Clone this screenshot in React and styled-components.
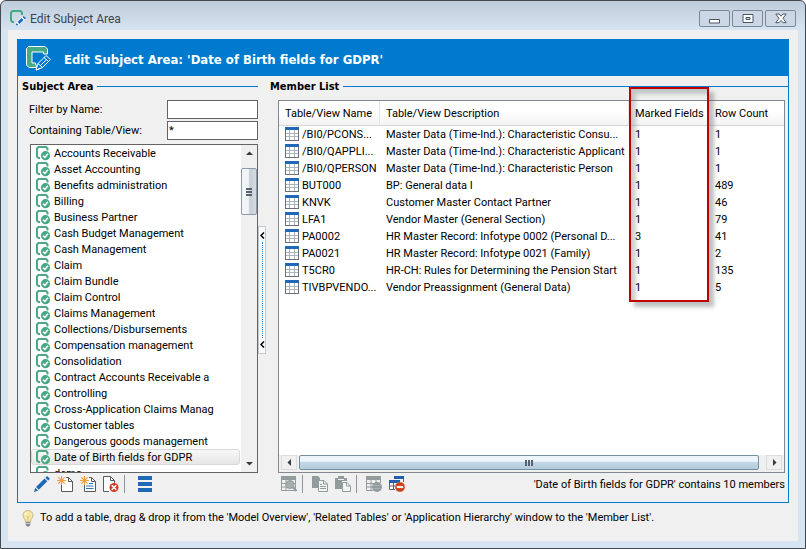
import React, { Component } from "react";
import styled, { createGlobalStyle, css } from "styled-components";

const subjects = [
  "Accounts Receivable",
  "Asset Accounting",
  "Benefits administration",
  "Billing",
  "Business Partner",
  "Cash Budget Management",
  "Cash Management",
  "Claim",
  "Claim Bundle",
  "Claim Control",
  "Claims Management",
  "Collections/Disbursements",
  "Compensation management",
  "Consolidation",
  "Contract Accounts Receivable a",
  "Controlling",
  "Cross-Application Claims Manag",
  "Customer tables",
  "Dangerous goods management",
  "Date of Birth fields for GDPR",
  "demo"
];

const members = [
  { name: "/BI0/PCONS...", description: "Master Data (Time-Ind.): Characteristic Consu...", marked: 1, rows: 1 },
  { name: "/BI0/QAPPLI...", description: "Master Data (Time-Ind.): Characteristic Applicant", marked: 1, rows: 1 },
  { name: "/BI0/QPERSON", description: "Master Data (Time-Ind.): Characteristic Person", marked: 1, rows: 1 },
  { name: "BUT000", description: "BP: General data I", marked: 1, rows: 489 },
  { name: "KNVK", description: "Customer Master Contact Partner", marked: 1, rows: 46 },
  { name: "LFA1", description: "Vendor Master (General Section)", marked: 1, rows: 79 },
  { name: "PA0002", description: "HR Master Record: Infotype 0002 (Personal D...", marked: 3, rows: 41 },
  { name: "PA0021", description: "HR Master Record: Infotype 0021 (Family)", marked: 1, rows: 2 },
  { name: "T5CR0", description: "HR-CH: Rules for Determining the Pension Start", marked: 1, rows: 135 },
  { name: "TIVBPVENDO...", description: "Vendor Preassignment (General Data)", marked: 1, rows: 5 }
];

const AppIcon = () => (
  <svg width="17" height="17" viewBox="0 0 17 17" fill="none">
    <path d="M4 12H2.5L1 10.5V2.5L2.5 1H10.5L12 2.5V5" stroke="#48aa84" strokeWidth="2" />
    <path d="M5 16L6 12.5L12.5 6L15.5 9L9 15Z" fill="#fff" />
    <path d="M5.500 15.500L6.500 13L8.500 15ZM7.500 12L11.500 8L13.500 10L9.500 14ZM12.500 7L13.500 6L16 8L14.500 9.300Z" fill="#1f68b8" />
  </svg>
);

const BannerIcon = () => (
  <svg width="26" height="25" viewBox="0 0 26 25">
    <path
      d="M2.500 .5H19L21.500 3V8H17.500V6H6V17H9.500L10.500 21.500H3L.5 19V2.500Z"
      fill="#48aa84"
      stroke="#fff"
    />
    <path d="M10 24L12 17.500L20 9.500L24.500 13.500L16.500 21.500Z" fill="#007acf" stroke="#fff" />
    <path d="M12 17.500L16.500 21.500M18 11.500L22.500 15.500M14.500 19.500L20.500 13.500M10 24L14 22.500" stroke="#fff" fill="none" />
  </svg>
);

const SubjectIcon = () => (
  <svg width="15" height="15" viewBox="0 0 15 15" fill="none">
    <path d="M4 12H2.500L1 10.500V2.500L2.500 1H10L11.500 2.500V4.500" stroke="#48aa84" strokeWidth="2" />
    <circle cx="9.500" cy="9.700" r="4.600" fill="#48aa84" />
    <path d="M7 9.700L8.800 11.500L12 7.800" stroke="#fff" strokeWidth="1.500" />
  </svg>
);

const TableIcon = () => (
  <svg width="14" height="14" viewBox="0 0 14 14" shapeRendering="crispEdges">
    <path d="M0 0H14V14H0Z" fill="#6b7076" />
    <path d="M1 3H13V13H1Z" fill="#fff" />
    <path d="M0 0H14V3H0Z" fill="#1f68b8" />
    <path d="M4.500 3V13M9.500 3V13M1 6.500H13M1 9.500H13" stroke="#a9b4bd" />
  </svg>
);

const PencilIcon = () => (
  <svg width="16" height="16" viewBox="0 0 16 16">
    <path d="M0 16L1.200 11.800L4 14.700ZM2 11L10.500 2.500L13.300 5.300L4.800 13.800ZM11.300 1.700L13 0L16 2.800L14.200 4.500Z" fill="#1f68b8" />
  </svg>
);

const Spark = () => (
  <path d="M4.500 0V9M0 4.500H9M1.300 1.300L7.700 7.700M7.700 1.300L1.300 7.700" stroke="#f0a040" strokeWidth="1.200" />
);

const NewIcon = () => (
  <svg width="16" height="16" viewBox="0 0 16 16" fill="none">
    <path d="M9 1.500H11.500L15.500 5.500V15.500H4.500V9" fill="#fff" stroke="#555b60" />
    <path d="M11.500 1.500V5.500H15.500" stroke="#555b60" />
    <Spark />
  </svg>
);

const NewFromIcon = () => (
  <svg width="16" height="16" viewBox="0 0 16 16" fill="none">
    <path d="M9 1.500H11.500L15.500 5.500V15.500H4.500V9" fill="#fff" stroke="#555b60" />
    <path d="M11.500 1.500V5.500H15.500" stroke="#555b60" />
    <path d="M9 7.500H13M6 10H13.500M6 12.500H13.500" stroke="#2d75bd" />
    <Spark />
  </svg>
);

const DeleteIcon = () => (
  <svg width="16" height="16" viewBox="0 0 16 16" fill="none">
    <path d="M6 15.500H.5V.5H7.500L11.500 4.500V7" fill="#fff" stroke="#555b60" />
    <path d="M7.500 .5V4.500H11.500" stroke="#555b60" />
    <circle cx="11" cy="11.500" r="4.500" fill="#d03c22" />
    <path d="M8.800 9.300L13.200 13.700M13.200 9.300L8.800 13.700" stroke="#fff" strokeWidth="1.600" />
  </svg>
);

const BarsIcon = () => (
  <svg width="16" height="16" viewBox="0 0 16 16">
    <path d="M0 0H14V4H0ZM0 6H14V10H0ZM0 12H14V16H0Z" fill="#1f68b8" />
  </svg>
);

const FindTableIcon = () => (
  <svg width="16" height="16" viewBox="0 0 16 16" fill="none">
    <path d="M.5 1.500H14.500V14.500H.5ZM.5 7.500H14M.5 11H14M5 3V14" stroke="#929c9c" />
    <path d="M0 0H15V4H0Z" fill="#929c9c" />
    <circle cx="9" cy="8.500" r="4" fill="#a4aeae" stroke="#929c9c" />
    <path d="M12 11.500L15.500 15" stroke="#929c9c" strokeWidth="2" />
  </svg>
);

const CopyIcon = () => (
  <svg width="16" height="16" viewBox="0 0 16 16" fill="none">
    <path d="M0 0H6L8 2V12H0Z" fill="#929c9c" />
    <path d="M6.500 4.500H12L15.500 8V15.500H6.500Z" fill="#f4f4f4" stroke="#929c9c" />
    <path d="M11.500 4.500V8H15.500M8 8.500H10M8 10.500H14M8 12.500H14" stroke="#929c9c" />
  </svg>
);

const PasteIcon = () => (
  <svg width="16" height="16" viewBox="0 0 16 16" fill="none">
    <path d="M0 2H3V0H9V2H12V5H7V13H0Z" fill="#929c9c" />
    <path d="M3 3.500H9" stroke="#f0f0f0" />
    <path d="M7.500 6.500H12L15.500 10V15.500H7.500Z" fill="#f4f4f4" stroke="#929c9c" />
    <path d="M11.500 6.500V10H15.500" stroke="#929c9c" />
  </svg>
);

const TableWorldIcon = () => (
  <svg width="16" height="16" viewBox="0 0 16 16" fill="none">
    <path d="M.5 1V14.500H7M.5 7.500H8M.5 11H7M5 3V14M10 3V7M14.500 3V7" stroke="#929c9c" />
    <path d="M0 0H15V4H0Z" fill="#929c9c" />
    <circle cx="11" cy="11" r="5" fill="#929c9c" />
    <path d="M7 9.500H15M7 12.500H15" stroke="#a8b2b2" />
  </svg>
);

const RemoveTableIcon = () => (
  <svg width="16" height="16" viewBox="0 0 16 16" fill="none">
    <path d="M.5 6V13.500H6M.5 10H6M4.500 7V13" stroke="#62686e" fill="#fff" />
    <path d="M5 0H15V3H5ZM0 4H11V7H0Z" fill="#1f5fae" />
    <path d="M14.500 3V6" stroke="#62686e" />
    <circle cx="11" cy="11" r="4.800" fill="#cf3b20" stroke="#e8803a" strokeWidth=".6" />
    <path d="M7.800 11H14.200" stroke="#fff" strokeWidth="2.200" />
  </svg>
);

const BulbIcon = () => (
  <svg width="12" height="17" viewBox="0 0 12 17">
    <path d="M6 .5C2.800 .5 1 2.800 1 5.300C1 8 3.500 8.800 3.700 12H8.300C8.500 8.800 11 8 11 5.300C11 2.800 9.200 .5 6 .5Z" fill="#f8e9a2" stroke="#b5ab82" strokeWidth=".8" />
    <path d="M4 2.500C2.800 3.500 2.500 5 3 6L5 3Z" fill="#fff" />
    <path d="M4.500 6L6 7.500L7.500 6M6 7V12" stroke="#d7bd60" fill="none" strokeWidth=".8" />
    <path d="M3.700 12H8.300V15L7 16.500H5L3.700 15Z" fill="#82868c" />
    <path d="M3.700 13.500H8.300" stroke="#c9ccd0" />
  </svg>
);

const Arrow = ({ d, size = 7 }) => (
  <svg width={size} height={size} viewBox="0 0 7 7">
    <path d={d} fill="#333a42" />
  </svg>
);

const Chevron = () => (
  <svg width="5" height="7" viewBox="0 0 5 7">
    <path d="M4 .5L1 3.500L4 6.500" stroke="#000" strokeWidth="1.500" fill="none" />
  </svg>
);

class App extends Component {
  state = {
    filter: "",
    containing: "*",
    selected: "Date of Birth fields for GDPR"
  };

  onChange = event => {
    this.setState({ [event.target.name]: event.target.value });
  };

  select = selected => {
    this.setState({ selected });
  };

  render() {
    const { filter, containing, selected } = this.state;
    const list = subjects
      .filter(subject => subject.toLowerCase().includes(filter.toLowerCase()))
      .map(subject => (
        <li key={subject}>
          <SubjectButton
            type="button"
            $active={subject === selected}
            onClick={() => this.select(subject)}
          >
            <SubjectIcon />
            <SubjectName>{subject}</SubjectName>
          </SubjectButton>
        </li>
      ));

    return (
      <Window>
        <GlobalStyle />
        <TitleBar>
          <AppIcon />
          <WindowTitle>Edit Subject Area</WindowTitle>
          <WindowButton type="button" aria-label="Minimize">
            <svg width="12" height="13" viewBox="0 0 12 13">
              <path d="M.5 7.500H10.500V11H.5Z" fill="#fff" stroke="#4d5561" />
            </svg>
          </WindowButton>
          <WindowButton type="button" aria-label="Maximize">
            <svg width="12" height="11" viewBox="0 0 12 11">
              <path d="M1 1.500H11V9.500H1Z" fill="#fff" stroke="#4d5561" />
              <path d="M4 4.500H8V6.500H4Z" fill="#c8d4e1" stroke="#4d5561" />
            </svg>
          </WindowButton>
          <WindowButton type="button" aria-label="Close">
            <svg width="12" height="11" viewBox="0 0 12 11">
              <path d="M.8 1H4L6 3.200L8 1H11.200L8 5.300L11.200 9.700H8L6 7.400L4 9.700H.8L4 5.300Z" fill="#fff" stroke="#4d5561" />
            </svg>
          </WindowButton>
        </TitleBar>

        <Client>
          <Panel>
            <Banner>
              <BannerIcon />
              <BannerTitle>Edit Subject Area: &#39;Date of Birth fields for GDPR&#39;</BannerTitle>
            </Banner>
            <Body>
              <SubjectPane>
                <Heading $indent>Subject Area</Heading>
                <Field>
                  <label htmlFor="filter">Filter by Name:</label>
                  <TextInput id="filter" name="filter" value={filter} onChange={this.onChange} />
                </Field>
                <Field>
                  <label htmlFor="containing">Containing Table/View:</label>
                  <TextInput id="containing" name="containing" value={containing} onChange={this.onChange} />
                </Field>
                <ListBox>
                  <SubjectList>{list}</SubjectList>
                  <VerticalBar>
                    <ArrowButton type="button" aria-label="Scroll up">
                      <Arrow d="M0 5L3.500 1.500L7 5Z" />
                    </ArrowButton>
                    <VerticalThumb>
                      <Grip $vertical />
                    </VerticalThumb>
                    <Spacer />
                    <ArrowButton type="button" aria-label="Scroll down">
                      <Arrow d="M0 2L3.500 5.500L7 2Z" />
                    </ArrowButton>
                  </VerticalBar>
                </ListBox>
                <Toolbar $indent>
                  <ToolButton type="button" aria-label="Edit"><PencilIcon /></ToolButton>
                  <ToolButton type="button" aria-label="New"><NewIcon /></ToolButton>
                  <ToolButton type="button" aria-label="New from selection"><NewFromIcon /></ToolButton>
                  <ToolButton type="button" aria-label="Delete"><DeleteIcon /></ToolButton>
                  <Separator $wide />
                  <ToolButton type="button" aria-label="Show list"><BarsIcon /></ToolButton>
                </Toolbar>
              </SubjectPane>

              <Splitter type="button" aria-label="Collapse subject areas">
                <Chevron />
                <Dots />
                <Chevron />
              </Splitter>

              <MemberPane>
                <Heading>Member List</Heading>
                <MemberBox>
                  <MemberTable>
                    <colgroup>
                      <NameCol />
                      <col />
                      <MarkedCol />
                      <CountCol />
                    </colgroup>
                    <thead>
                      <tr>
                        <HeadCell>Table/View Name</HeadCell>
                        <HeadCell>Table/View Description</HeadCell>
                        <HeadCell>Marked Fields</HeadCell>
                        <HeadCell>Row Count</HeadCell>
                      </tr>
                    </thead>
                    <tbody>
                      {members.map(member => (
                        <tr key={member.name}>
                          <Cell>
                            <NameWrapper>
                              <TableIcon />
                              {member.name}
                            </NameWrapper>
                          </Cell>
                          <Cell>{member.description}</Cell>
                          <Cell>{member.marked}</Cell>
                          <Cell>{member.rows}</Cell>
                        </tr>
                      ))}
                    </tbody>
                  </MemberTable>
                  <Spacer />
                  <HorizontalBar>
                    <ArrowButton type="button" $framed aria-label="Scroll left">
                      <Arrow d="M5 0L1.500 3.500L5 7Z" />
                    </ArrowButton>
                    <HorizontalThumb>
                      <Grip />
                    </HorizontalThumb>
                    <ArrowButton type="button" $framed aria-label="Scroll right">
                      <Arrow d="M2 0L5.500 3.500L2 7Z" />
                    </ArrowButton>
                  </HorizontalBar>
                  <Highlight />
                </MemberBox>
                <Toolbar>
                  <ToolButton type="button" disabled aria-label="Find table"><FindTableIcon /></ToolButton>
                  <Separator />
                  <ToolButton type="button" disabled aria-label="Copy"><CopyIcon /></ToolButton>
                  <ToolButton type="button" disabled aria-label="Paste"><PasteIcon /></ToolButton>
                  <Separator />
                  <ToolButton type="button" disabled aria-label="Open table"><TableWorldIcon /></ToolButton>
                  <ToolButton type="button" aria-label="Remove table"><RemoveTableIcon /></ToolButton>
                  <Status>&#39;Date of Birth fields for GDPR&#39; contains 10 members</Status>
                </Toolbar>
              </MemberPane>
            </Body>
          </Panel>
          <Tip>
            <BulbIcon />
            <span>
              To add a table, drag &amp; drop it from the &#39;Model Overview&#39;, &#39;Related Tables&#39; or
              &#39;Application Hierarchy&#39; window to the &#39;Member List&#39;.
            </span>
          </Tip>
        </Client>
      </Window>
    );
  }
}

export default App;

const GlobalStyle = createGlobalStyle`
  * {
    box-sizing: border-box;
  }
  body {
    margin: 0;
    font-family: Roboto, sans-serif;
    font-size: 11px;
    line-height: 16px;
    color: #000;
  }
  button, input {
    font: inherit;
    color: inherit;
  }
  svg {
    display: block;
    flex: none;
  }
`;

const Window = styled.div`
  display: flex;
  flex-direction: column;
  height: 100vh;
  min-height: 440px;
  padding: 0 7px 7px;
  border: 1px solid #45484d;
  border-radius: 6px 6px 0 0;
  background: linear-gradient(#bfccd9, #d7e4f2 30px);
`;

const TitleBar = styled.header`
  display: flex;
  align-items: center;
  gap: 2px;
  height: 29px;
  padding: 6px 2px 0 2px;
`;

const WindowTitle = styled.h1`
  flex: 1;
  margin: 0 0 0 1px;
  font-size: 12px;
  font-weight: 400;
  color: #3b4450;
`;

const WindowButton = styled.button`
  display: flex;
  align-items: center;
  justify-content: center;
  width: 31px;
  height: 17px;
  padding: 0;
  border: 1px solid #7d8896;
  border-radius: 2px;
  background: #cbd7e4;
`;

const Client = styled.main`
  display: flex;
  flex: 1;
  flex-direction: column;
  min-height: 0;
  padding: 9px 9px 8px;
  background: #f0f0f0;
`;

const Panel = styled.section`
  display: flex;
  flex: 1;
  flex-direction: column;
  min-height: 0;
  border: 1px solid #007acf;
`;

const Banner = styled.div`
  display: flex;
  align-items: center;
  gap: 12px;
  height: 36px;
  padding-left: 8px;
  background: #007acf;
`;

const boldFont = css`
  font-family: "DejaVu Sans Condensed", "DejaVu Sans", sans-serif;
  font-weight: 700;
`;

const BannerTitle = styled.h2`
  ${boldFont}
  margin: 4px 0 0;
  font-size: 13px;
  color: #fff;
`;

const Body = styled.div`
  display: flex;
  flex: 1;
  min-height: 0;
  padding: 2px 0 7px;
`;

const SubjectPane = styled.section`
  display: flex;
  flex: none;
  flex-direction: column;
  width: 240px;
`;

const MemberPane = styled.section`
  display: flex;
  flex: 1;
  flex-direction: column;
  min-width: 0;
  margin-left: 4px;
`;

const Heading = styled.h3`
  ${boldFont}
  display: flex;
  align-items: center;
  gap: 4px;
  height: 18px;
  margin: 0 0 4px;
  padding-left: ${props => (props.$indent ? "4px" : "0")};
  font-size: 11px;

  &::after {
    content: "";
    flex: 1;
    height: 1px;
    margin-bottom: 1px;
    background: #007acf;
  }
`;

const Field = styled.div`
  display: flex;
  align-items: center;
  justify-content: space-between;
  height: 19px;
  margin-bottom: 2px;
  padding-left: 11px;
`;

const TextInput = styled.input`
  width: 91px;
  height: 19px;
  padding: 0 1px;
  border: 1px solid #646464;
  background: #fff;
`;

const ListBox = styled.div`
  display: flex;
  flex: 1;
  min-height: 0;
  margin: 2px 0 0 12px;
  border: 1px solid #646464;
  background: #fff;
`;

const SubjectList = styled.ul`
  flex: 1;
  min-width: 0;
  margin: 0;
  padding: 0 1px 0 0;
  overflow: hidden;
  list-style-type: none;
`;

const SubjectButton = styled.button`
  display: flex;
  align-items: center;
  gap: 3px;
  width: 100%;
  height: 16px;
  padding: 1px 0 0 4px;
  border: 1px solid transparent;
  border-radius: 3px;
  background: none;
  text-align: left;
  white-space: nowrap;

  ${props =>
    props.$active &&
    css`
      border-color: #d9d9d9;
      background: linear-gradient(#f8f8f8, #e6e6e6);
    `}
`;

const SubjectName = styled.span`
  line-height: 14px;
`;

const VerticalBar = styled.div`
  display: flex;
  flex: none;
  flex-direction: column;
  width: 16px;
  background: #f0f0f0;
`;

const thumb = css`
  display: flex;
  align-items: center;
  justify-content: center;
  border: 1px solid #8c99a6;
  border-radius: 2px;
`;

const VerticalThumb = styled.div`
  ${thumb}
  height: 47px;
  margin-top: 6px;
  background: linear-gradient(90deg, #f2f5f7 45%, #c6cfd6 55%, #d5dce1);
`;

const HorizontalThumb = styled.div`
  ${thumb}
  flex: 1;
  margin: 0 7px 0 2px;
  border-color: #73909f;
  background: linear-gradient(#edf5fa 40%, #c3d7e5 50%, #b3cbdb);
`;

const Grip = styled.span`
  width: ${props => (props.$vertical ? "6px" : "8px")};
  height: ${props => (props.$vertical ? "8px" : "6px")};
  background: repeating-linear-gradient(
    ${props => (props.$vertical ? "180deg" : "90deg")},
    #59636d 0 2px,
    transparent 2px 3px
  );
`;

const ArrowButton = styled.button`
  display: flex;
  flex: none;
  align-items: center;
  justify-content: center;
  width: 16px;
  height: ${props => (props.$framed ? "15px" : "17px")};
  padding: 0;
  border: ${props => (props.$framed ? "1px solid #dcdcdc" : "0")};
  background: none;
`;

const HorizontalBar = styled.div`
  display: flex;
  height: 17px;
  padding: 0 2px 2px;
  background: #f0f0f0;
`;

const Spacer = styled.div`
  flex: 1;
`;

const Splitter = styled.button`
  display: flex;
  flex: none;
  flex-direction: column;
  align-items: center;
  align-self: center;
  width: 8px;
  height: 128px;
  margin-top: 6px;
  padding: 5px 0;
  border: 1px solid #c4c9cf;
  background: #fafafa;
`;

const Dots = styled.span`
  flex: 1;
  margin: 3px 0;
  border-left: 1px dotted #2089d6;
`;

const MemberBox = styled.div`
  position: relative;
  display: flex;
  flex: 1;
  flex-direction: column;
  min-height: 0;
  margin: 0 3px 0 8px;
  border: 1px solid #828790;
  background: #fff;
`;

const MemberTable = styled.table`
  width: 100%;
  table-layout: fixed;
  border-collapse: separate;
  border-spacing: 0;
`;

const NameCol = styled.col`
  width: 101px;
`;

const MarkedCol = styled.col`
  width: 80px;
`;

const CountCol = styled.col`
  width: 75px;
`;

const HeadCell = styled.th`
  height: 25px;
  padding: 2px 0 0 6px;
  border-right: 1px solid #e3e5e8;
  border-bottom: 1px solid #d5d5d5;
  background: linear-gradient(#fff 45%, #f3f3f3);
  font-weight: 400;
  text-align: left;
  white-space: nowrap;

  &:last-child {
    border-right: 0;
  }
`;

const Cell = styled.td`
  height: 17px;
  padding: 1px 0 0 6px;
  white-space: nowrap;
`;

const NameWrapper = styled.div`
  display: flex;
  gap: 3px;
`;

const Highlight = styled.div`
  position: absolute;
  top: -14px;
  right: 75px;
  width: 80px;
  height: 215px;
  border: 2px solid #c00000;
  box-shadow: 5px 5px 4px rgba(90, 100, 100, 0.4), inset 5px 5px 4px rgba(90, 100, 100, 0.3);
  pointer-events: none;
`;

const Toolbar = styled.div`
  display: flex;
  align-items: center;
  gap: 4px;
  height: 22px;
  padding: 0 3px 0 ${props => (props.$indent ? "14px" : "9px")};
`;

const ToolButton = styled.button`
  display: flex;
  align-items: center;
  justify-content: center;
  width: 19px;
  height: 20px;
  padding: 0;
  border: 0;
  background: none;
`;

const Separator = styled.span`
  width: 1px;
  height: 18px;
  margin-right: ${props => (props.$wide ? "7px" : "3px")};
  background: #8c96a6;
`;

const Status = styled.span`
  flex: 1;
  padding-top: 2px;
  text-align: right;
  white-space: nowrap;
`;

const Tip = styled.footer`
  display: flex;
  align-items: center;
  gap: 6px;
  height: 30px;
  padding-left: 5px;
`;
